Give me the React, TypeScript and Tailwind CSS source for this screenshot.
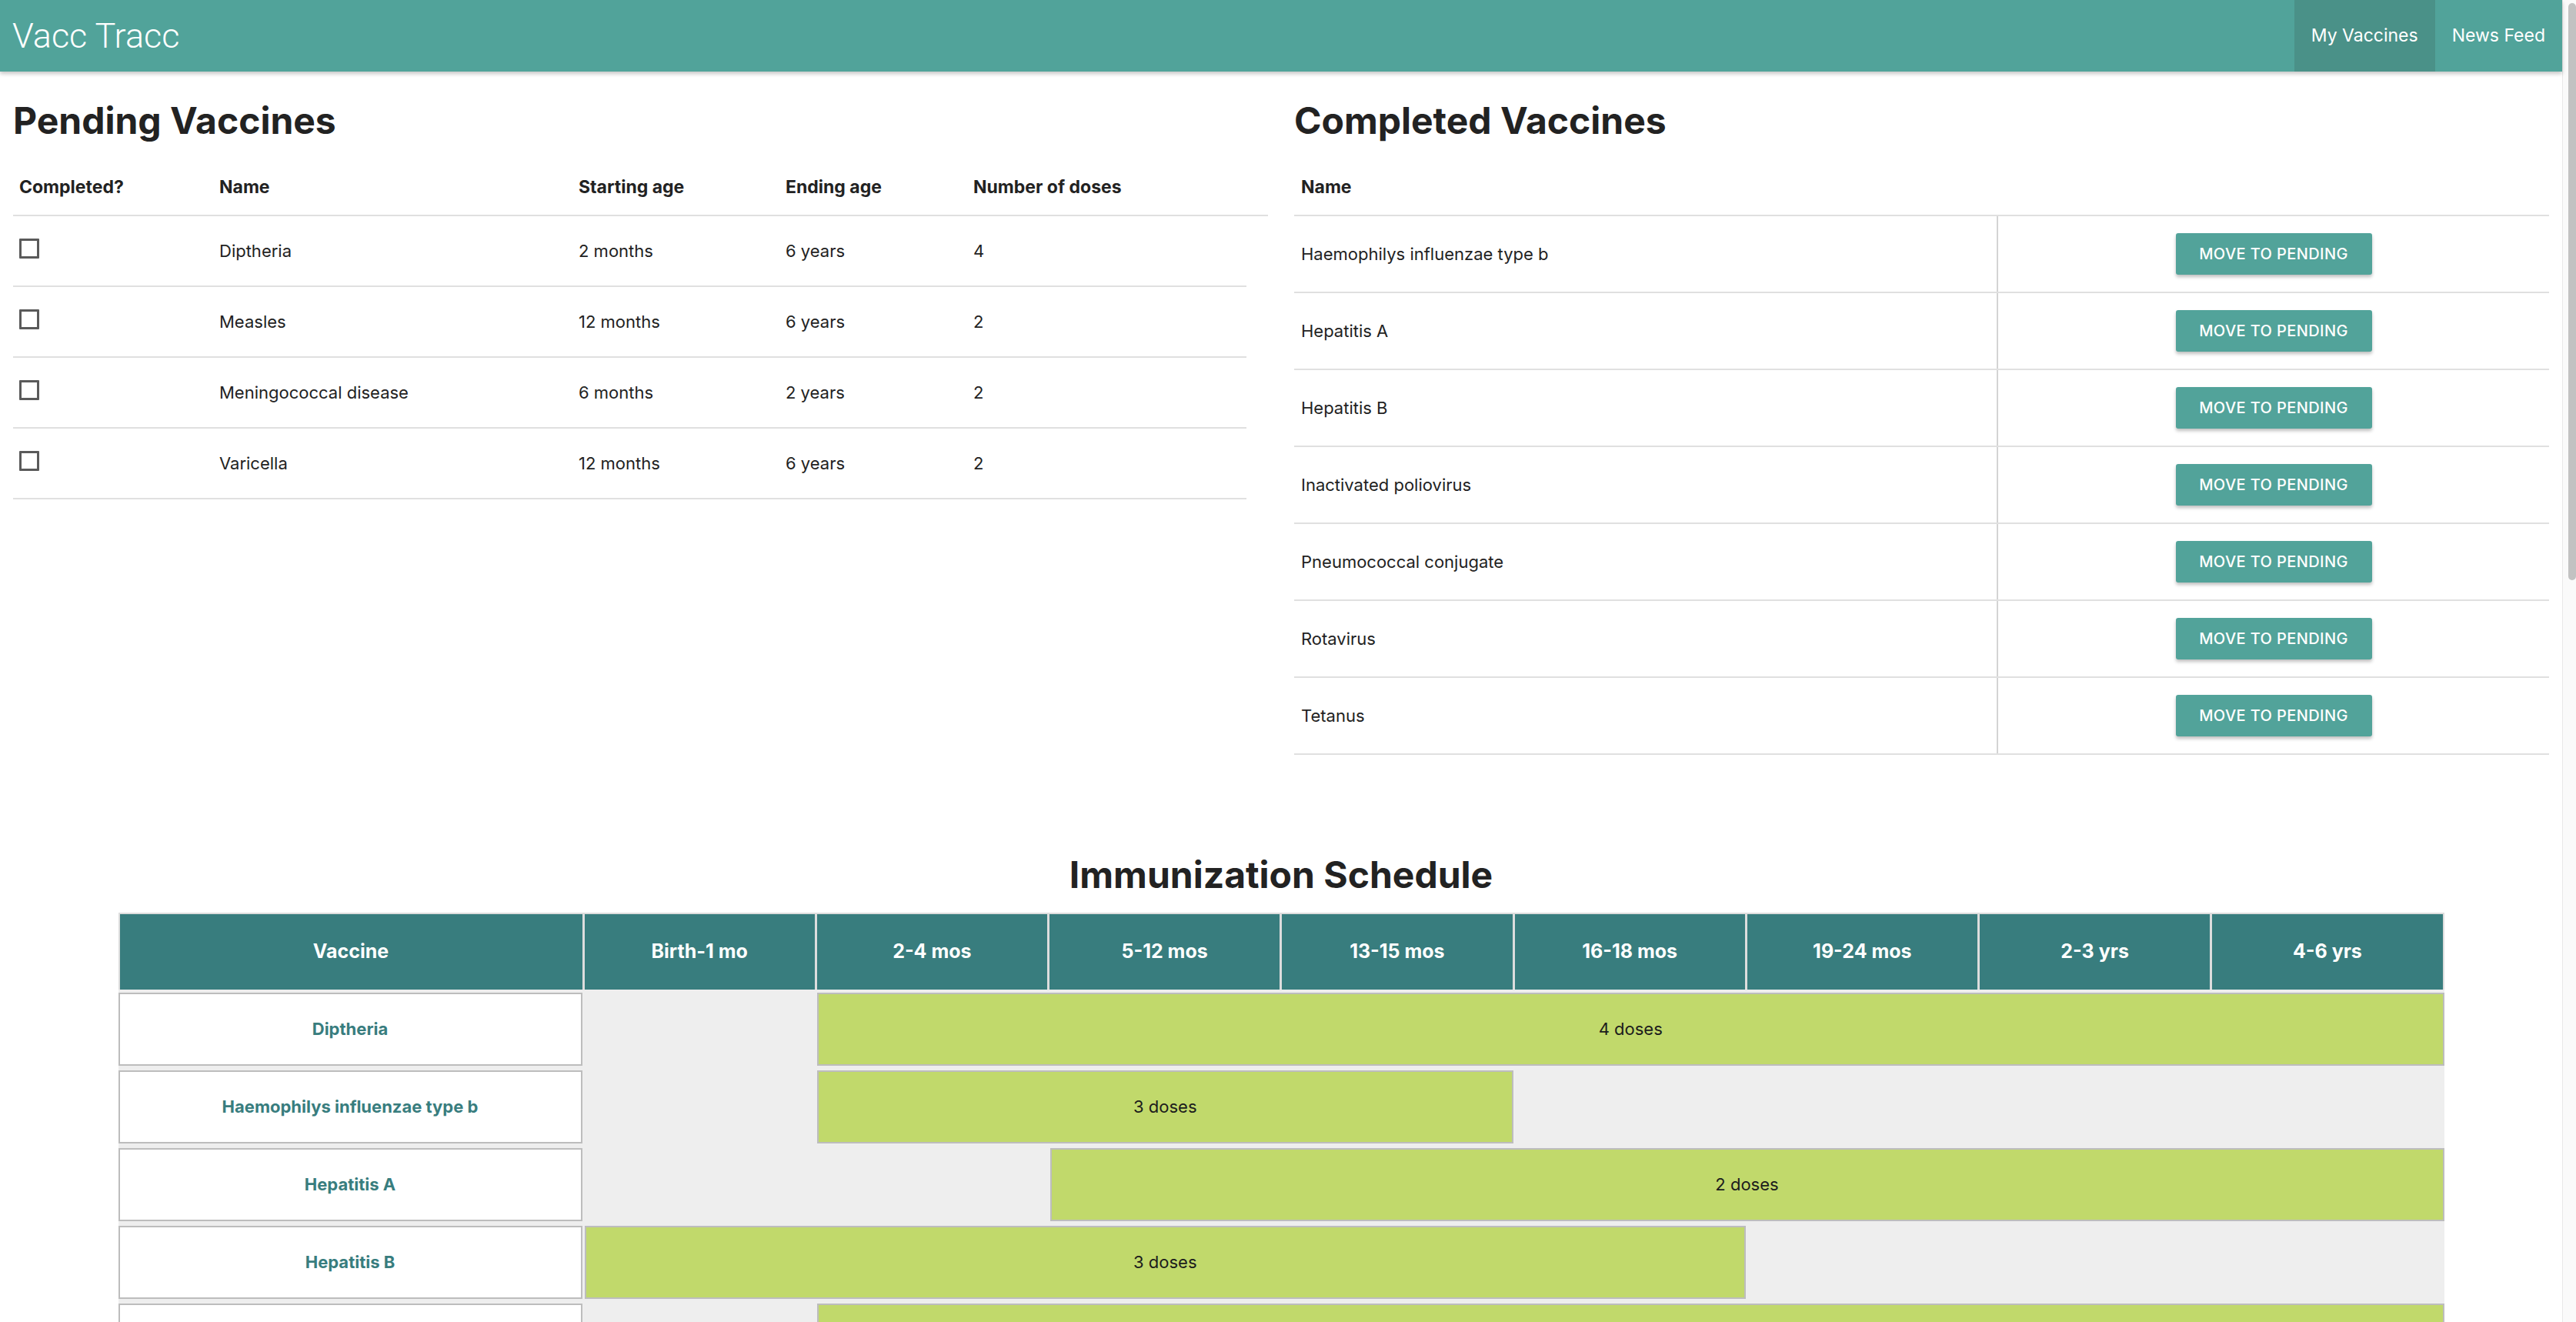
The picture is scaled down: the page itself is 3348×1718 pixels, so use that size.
import React from 'react';

const pending = [
    { name: 'Diptheria', start: '2 months', end: '6 years', doses: '4' },
    { name: 'Measles', start: '12 months', end: '6 years', doses: '2' },
    { name: 'Meningococcal disease', start: '6 months', end: '2 years', doses: '2' },
    { name: 'Varicella', start: '12 months', end: '6 years', doses: '2' },
];

const completed = [
    'Haemophilys influenzae type b',
    'Hepatitis A',
    'Hepatitis B',
    'Inactivated poliovirus',
    'Pneumococcal conjugate',
    'Rotavirus',
    'Tetanus',
];

const ages = ['Birth-1 mo', '2-4 mos', '5-12 mos', '13-15 mos', '16-18 mos', '19-24 mos', '2-3 yrs', '4-6 yrs'];

// bar placement is written out in full so tailwind picks it up
const schedule = [
    { name: 'Diptheria', bar: 'col-start-3 col-span-7', label: '4 doses' },
    { name: 'Haemophilys influenzae type b', bar: 'col-start-3 col-span-3', label: '3 doses' },
    { name: 'Hepatitis A', bar: 'col-start-4 col-span-6', label: '2 doses' },
    { name: 'Hepatitis B', bar: 'col-start-2 col-span-5', label: '3 doses' },
    { name: 'Inactivated poliovirus', bar: 'col-start-3 col-span-7', label: '4 doses' },
    { name: 'Measles', bar: 'col-start-4 col-span-6', label: '2 doses' },
];

function Navbar() {
    return (
        <nav className="h-[93px] bg-[#51a39a] flex items-center justify-between shadow-[0_3px_5px_rgba(0,0,0,0.22)] relative z-10">
            <span className="pl-[16px] text-white text-[45px] font-light font-['Roboto',sans-serif] leading-none">Vacc Tracc</span>
            <div className="flex h-full text-white text-[23px]">
                <a className="h-full px-[22px] flex items-center bg-[#4a9188]">My Vaccines</a>
                <a className="h-full px-[22px] flex items-center">News Feed</a>
            </div>
        </nav>
    );
}

function PendingTable() {
    return (
        <div>
            <div className="grid grid-cols-[260px_467px_269px_244px_1fr] pt-[51px] pb-[24px] border-b-2 border-[#e0e0e0] text-[23px] font-bold leading-none">
                <span className="px-[8px]">Completed?</span>
                <span className="px-[8px]">Name</span>
                <span className="px-[8px]">Starting age</span>
                <span className="px-[8px]">Ending age</span>
                <span className="px-[8px]">Number of doses</span>
            </div>
            {pending.map((v) => (
                <div key={v.name} className="mr-[28px] h-[92px] grid grid-cols-[260px_467px_269px_244px_1fr] items-center border-b-2 border-[#e0e0e0] text-[22px]">
                    <span className="px-[8px]">
                        <span className="block w-[26px] h-[26px] border-[3px] border-[#5a5a5a] rounded-[1px] -mt-[6px]" />
                    </span>
                    <span className="px-[8px]">{v.name}</span>
                    <span className="px-[8px]">{v.start}</span>
                    <span className="px-[8px]">{v.end}</span>
                    <span className="px-[8px]">{v.doses}</span>
                </div>
            ))}
        </div>
    );
}

function CompletedTable() {
    return (
        <div>
            <div className="pt-[51px] pb-[24px] px-[9px] border-b-2 border-[#e0e0e0] text-[23px] font-bold leading-none">Name</div>
            {completed.map((name) => (
                <div key={name} className="h-[100px] grid grid-cols-[913px_1fr] border-b-2 border-[#e0e0e0] text-[22px]">
                    <span className="px-[9px] flex items-center">{name}</span>
                    <div className="border-l-2 border-[#d4d4d4] flex items-center justify-center">
                        <button className="w-[255px] h-[54px] rounded-[3px] bg-[#52a39a] text-white text-[20px] font-medium tracking-[0.4px] shadow-[0_3px_4px_rgba(0,0,0,0.25)]">
                            MOVE TO PENDING
                        </button>
                    </div>
                </div>
            ))}
        </div>
    );
}

function Schedule() {
    return (
        <div className="w-[3023px] mx-auto mt-[25px]">
            <div className="grid grid-cols-[601px_repeat(8,minmax(0,1fr))] gap-x-[3px] bg-[#dddddd] border-t-2 border-x-2 border-[#dddddd] text-white text-[25px] font-bold">
                <div className="h-[98px] bg-[#387d7e] flex items-center justify-center">Vaccine</div>
                {ages.map((a) => (
                    <div key={a} className="h-[98px] bg-[#387d7e] flex items-center justify-center">{a}</div>
                ))}
            </div>
            <div className="bg-[#eeeeee] pt-[4px] flex flex-col gap-y-[6px] pb-[40px]">
                {schedule.map((row) => (
                    <div key={row.name} className="grid grid-cols-[603px_repeat(8,minmax(0,1fr))] gap-x-[3px] h-[95px] shrink-0">
                        <div className="col-start-1 bg-white border-2 border-[#bdbdbd] flex items-center justify-center text-[22px] font-bold text-[#387d7e]">
                            {row.name}
                        </div>
                        <div className={`${row.bar} bg-[#c1d96b] border-2 border-[#bdbdbd] flex items-center justify-center text-[22px] text-[#1c1c1c]`}>
                            {row.label}
                        </div>
                    </div>
                ))}
            </div>
        </div>
    );
}

export default function App() {
    return (
        <div className="flex h-[1718px] overflow-hidden bg-white text-[#222222] font-['Inter','Noto_Sans',sans-serif]">
            <main className="w-[3330px] shrink-0">
                <Navbar />
                <div className="grid grid-cols-2">
                    <section className="px-[17px]">
                        <h2 className="mt-[40px] text-[48px] font-bold leading-none">Pending Vaccines</h2>
                        <PendingTable />
                    </section>
                    <section className="px-[17px]">
                        <h2 className="mt-[40px] text-[48px] font-bold leading-none">Completed Vaccines</h2>
                        <CompletedTable />
                    </section>
                </div>
                <h2 className="mt-[132px] text-center text-[48px] font-bold leading-none">Immunization Schedule</h2>
                <Schedule />
            </main>
            <aside className="w-[18px] shrink-0 bg-[#fafafa] border-l border-[#e8e8e8] pt-[4px] pl-[7px]">
                <div className="w-[10px] h-[750px] rounded-full bg-[#c2c2c2]" />
            </aside>
        </div>
    );
}
